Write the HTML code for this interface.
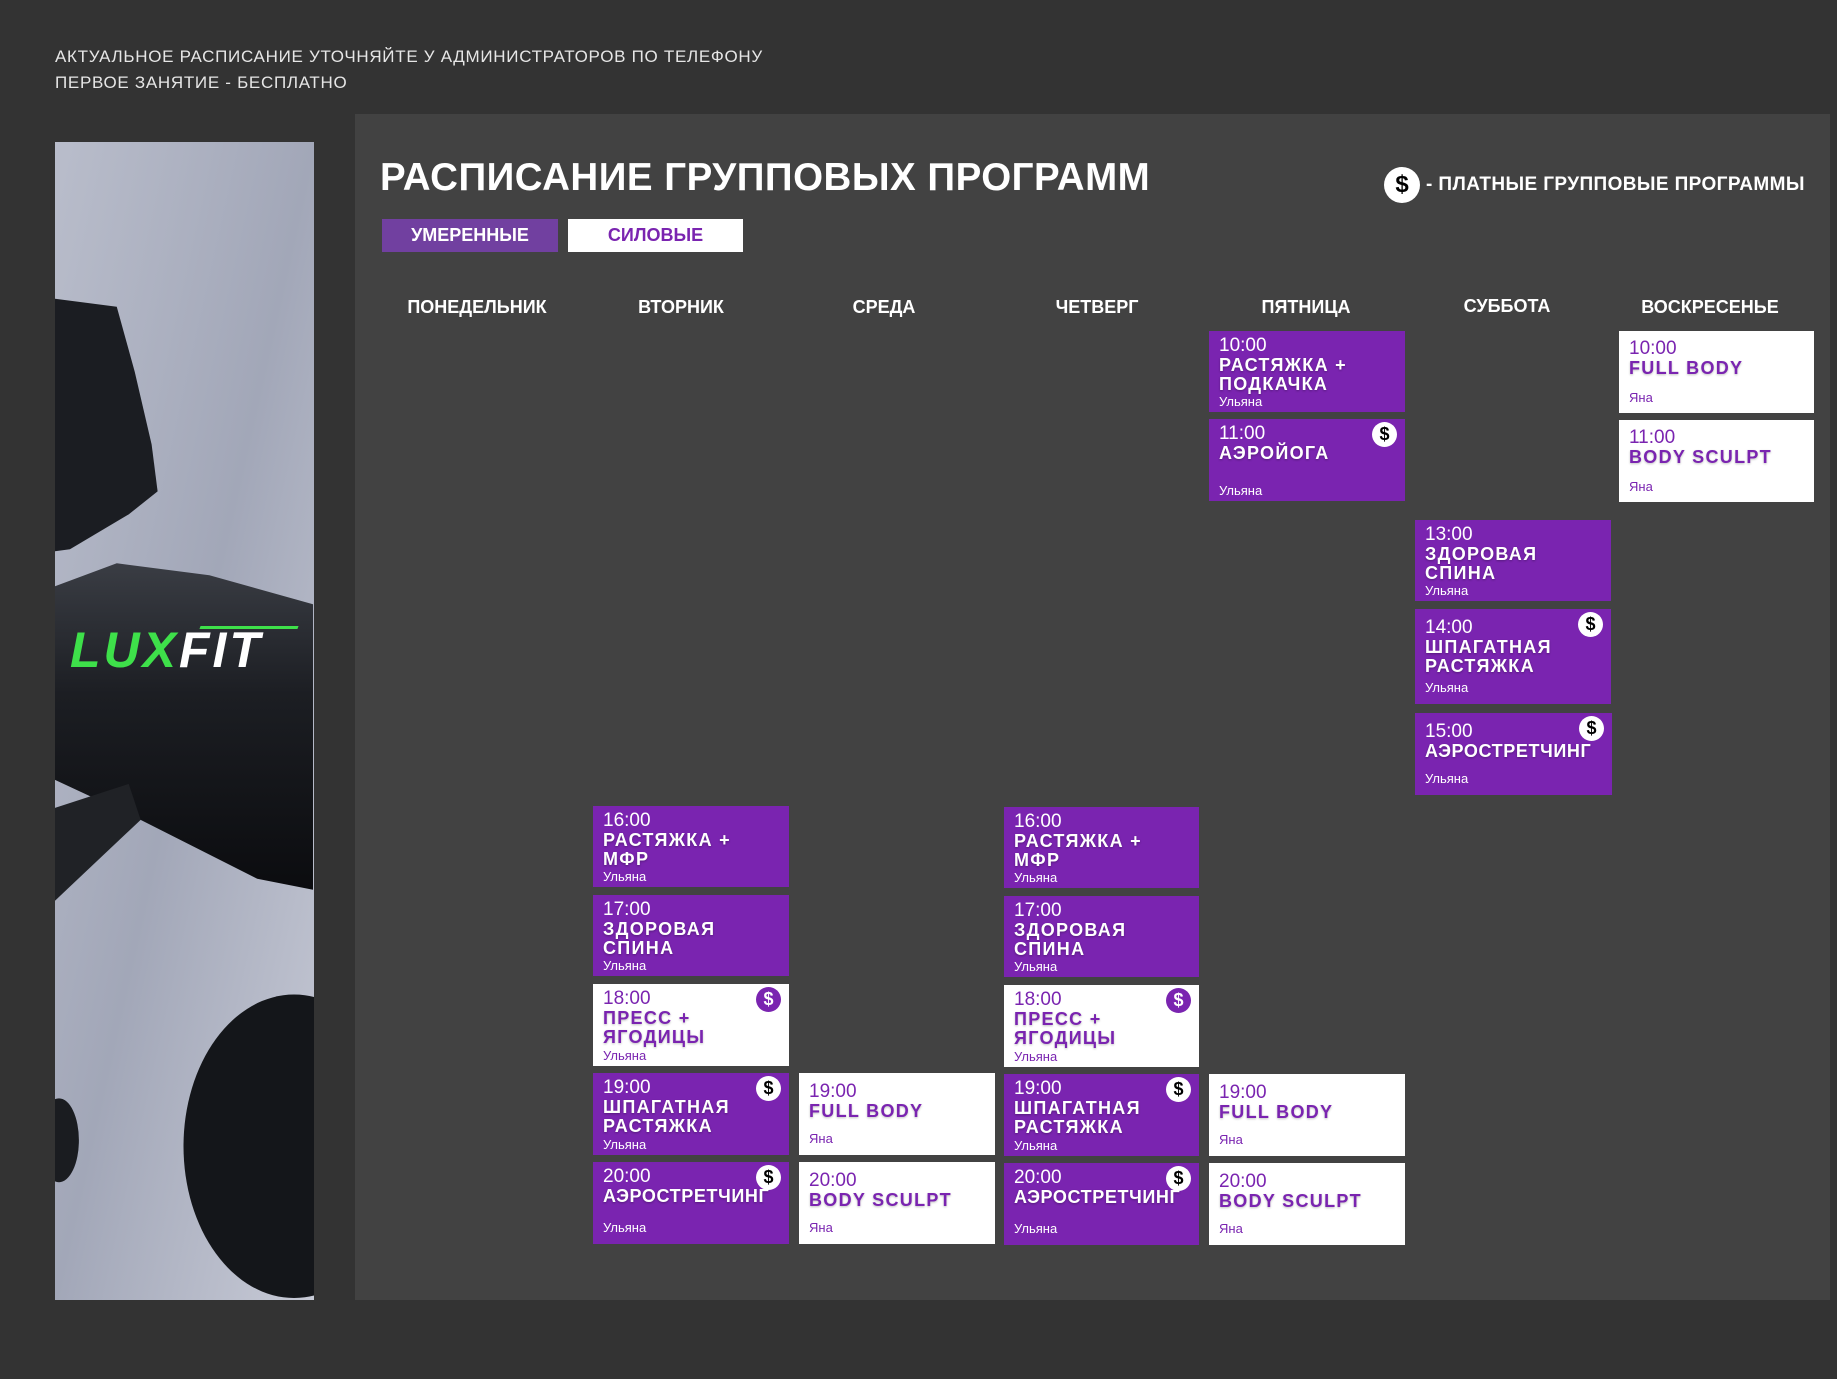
<!DOCTYPE html>
<html><head><meta charset="utf-8"><style>
*{margin:0;padding:0;box-sizing:border-box}
body{width:1837px;height:1379px;background:#333333;position:relative;overflow:hidden;font-family:"Liberation Sans",sans-serif}
.note{position:absolute;left:55px;color:#e6e6e6;font-size:17px;letter-spacing:0.7px;white-space:nowrap}
.panel{position:absolute;left:355px;top:114px;width:1475px;height:1186px;background:#424242}
.title{position:absolute;left:380px;top:156px;color:#fff;font-size:38.5px;font-weight:bold;letter-spacing:0.5px;white-space:nowrap}
.btn{position:absolute;top:219px;height:33px;font-size:18px;font-weight:bold;text-align:center;line-height:33px}
.day{position:absolute;top:297px;width:220px;margin-left:-110px;text-align:center;color:#fff;font-weight:bold;font-size:18px}
.c{position:absolute;background:#7a24b0;color:#fff;padding:5px 10px 0 10px}
.c.w{background:#fff;color:#7a24b0}
.t{font-size:19px;line-height:20px}
.n{font-weight:bold;font-size:18px;letter-spacing:1.3px;line-height:19px;text-shadow:0 1px 2px rgba(0,0,0,.3);white-space:nowrap}
.w .n{text-shadow:0 1px 2px rgba(0,0,0,.25)}
.n.s{letter-spacing:0.6px}
.u{position:absolute;left:10px;bottom:3px;font-size:13px}
.d{position:absolute;right:8px;top:3px;width:25px;height:25px;border-radius:50%;background:#fff;color:#000;font-weight:bold;font-size:18px;text-align:center;line-height:25px}
.w .d{background:#7a24b0;color:#fff}
</style></head><body>
<div class="note" style="top:47px">АКТУАЛЬНОЕ РАСПИСАНИЕ УТОЧНЯЙТЕ У АДМИНИСТРАТОРОВ ПО ТЕЛЕФОНУ</div>
<div class="note" style="top:73px">ПЕРВОЕ ЗАНЯТИЕ - БЕСПЛАТНО</div>
<div class="panel"></div>
<svg style="position:absolute;left:55px;top:142px" width="259" height="1158" viewBox="0 0 260 1160" preserveAspectRatio="none">
<defs><linearGradient id="g" x1="0" y1="0" x2="1" y2="1"><stop offset="0" stop-color="#b9bdcb"/><stop offset="0.5" stop-color="#a2a7b8"/><stop offset="1" stop-color="#c7cad6"/></linearGradient>
<linearGradient id="m" x1="0" y1="0" x2="0" y2="1"><stop offset="0" stop-color="#3a3d44"/><stop offset="0.4" stop-color="#1c1e23"/><stop offset="1" stop-color="#0b0c0f"/></linearGradient></defs>
<rect width="260" height="1160" fill="url(#g)"/>
<path d="M0 157 L62 165 L80 230 L97 303 L103 350 L74 373 L15 408 L0 410Z" fill="#1b1d22"/>
<path d="M0 445 L62 422 L155 434 L259 463 L259 749 L203 738 L86 679 L0 639Z" fill="url(#m)"/>
<path d="M0 667 L74 643 L86 679 L0 760Z" fill="#202226"/>
<ellipse cx="240" cy="1006" rx="111" ry="152" fill="#14161a"/>
<ellipse cx="4" cy="1000" rx="20" ry="42" fill="#1a1c20"/>
</svg>
<div style="position:absolute;left:70px;top:622px;width:230px;height:56px;font-style:italic;font-weight:900;font-size:50px;letter-spacing:3px;line-height:56px;font-family:'Liberation Sans',sans-serif"><span style="color:#3ee04a">LUX</span><span style="color:#fff">FIT</span></div>
<div style="position:absolute;left:200px;top:626px;width:98px;height:3px;background:#3ee04a;transform:skewX(-20deg)"></div>

<div class="title">РАСПИСАНИЕ ГРУППОВЫХ ПРОГРАММ</div>
<div class="btn" style="left:382px;width:176px;background:#7140a0;color:#fff">УМЕРЕННЫЕ</div>
<div class="btn" style="left:568px;width:175px;background:#fff;color:#7a24b0">СИЛОВЫЕ</div>
<div style="position:absolute;left:1384px;top:167px;width:36px;height:36px;border-radius:50%;background:#fff;color:#000;font-weight:bold;font-size:24px;text-align:center;line-height:36px">$</div>
<div style="position:absolute;left:1426px;top:174px;color:#fff;font-weight:bold;font-size:19px;letter-spacing:0.4px;white-space:nowrap">- ПЛАТНЫЕ ГРУППОВЫЕ ПРОГРАММЫ</div>

<div class="day" style="left:477px">ПОНЕДЕЛЬНИК</div>
<div class="day" style="left:681px">ВТОРНИК</div>
<div class="day" style="left:884px">СРЕДА</div>
<div class="day" style="left:1097px">ЧЕТВЕРГ</div>
<div class="day" style="left:1306px">ПЯТНИЦА</div>
<div class="day" style="left:1507px;top:296px">СУББОТА</div>
<div class="day" style="left:1710px">ВОСКРЕСЕНЬЕ</div>

<!-- Friday -->
<div class="c" style="left:1209px;top:331px;width:196px;height:81px"><div class="t">10:00</div><div class="n">РАСТЯЖКА +<br>ПОДКАЧКА</div><div class="u">Ульяна</div></div>
<div class="c" style="left:1209px;top:419px;width:196px;height:82px"><div class="t">11:00</div><div class="n">АЭРОЙОГА</div><div class="u">Ульяна</div><div class="d">$</div></div>
<div class="c w" style="left:1209px;top:1074px;width:196px;height:82px"><div class="t" style="margin-top:4px">19:00</div><div class="n">FULL BODY</div><div class="u" style="bottom:9px">Яна</div></div>
<div class="c w" style="left:1209px;top:1163px;width:196px;height:82px"><div class="t" style="margin-top:4px">20:00</div><div class="n">BODY SCULPT</div><div class="u" style="bottom:9px">Яна</div></div>
<!-- Sunday -->
<div class="c w" style="left:1619px;top:331px;width:195px;height:82px"><div class="t" style="margin-top:3px">10:00</div><div class="n">FULL BODY</div><div class="u" style="bottom:8px">Яна</div></div>
<div class="c w" style="left:1619px;top:420px;width:195px;height:82px"><div class="t" style="margin-top:3px">11:00</div><div class="n">BODY SCULPT</div><div class="u" style="bottom:8px">Яна</div></div>
<!-- Saturday -->
<div class="c" style="left:1415px;top:520px;width:196px;height:81px"><div class="t">13:00</div><div class="n">ЗДОРОВАЯ<br>СПИНА</div><div class="u">Ульяна</div></div>
<div class="c" style="left:1415px;top:609px;width:196px;height:95px"><div class="t" style="margin-top:4px">14:00</div><div class="n">ШПАГАТНАЯ<br>РАСТЯЖКА</div><div class="u" style="bottom:9px">Ульяна</div><div class="d">$</div></div>
<div class="c" style="left:1415px;top:713px;width:197px;height:82px"><div class="t" style="margin-top:4px">15:00</div><div class="n s">АЭРОСТРЕТЧИНГ</div><div class="u" style="bottom:9px">Ульяна</div><div class="d">$</div></div>
<!-- Tuesday -->
<div class="c" style="left:593px;top:806px;width:196px;height:81px"><div class="t">16:00</div><div class="n">РАСТЯЖКА +<br>МФР</div><div class="u">Ульяна</div></div>
<div class="c" style="left:593px;top:895px;width:196px;height:81px"><div class="t">17:00</div><div class="n">ЗДОРОВАЯ<br>СПИНА</div><div class="u">Ульяна</div></div>
<div class="c w" style="left:593px;top:984px;width:196px;height:82px"><div class="t">18:00</div><div class="n">ПРЕСС +<br>ЯГОДИЦЫ</div><div class="u">Ульяна</div><div class="d">$</div></div>
<div class="c" style="left:593px;top:1073px;width:196px;height:82px"><div class="t">19:00</div><div class="n">ШПАГАТНАЯ<br>РАСТЯЖКА</div><div class="u">Ульяна</div><div class="d">$</div></div>
<div class="c" style="left:593px;top:1162px;width:196px;height:82px"><div class="t">20:00</div><div class="n s">АЭРОСТРЕТЧИНГ</div><div class="u" style="bottom:9px">Ульяна</div><div class="d">$</div></div>
<!-- Wednesday -->
<div class="c w" style="left:799px;top:1073px;width:196px;height:82px"><div class="t" style="margin-top:4px">19:00</div><div class="n">FULL BODY</div><div class="u" style="bottom:9px">Яна</div></div>
<div class="c w" style="left:799px;top:1162px;width:196px;height:82px"><div class="t" style="margin-top:4px">20:00</div><div class="n">BODY SCULPT</div><div class="u" style="bottom:9px">Яна</div></div>
<!-- Thursday -->
<div class="c" style="left:1004px;top:807px;width:195px;height:81px"><div class="t">16:00</div><div class="n">РАСТЯЖКА +<br>МФР</div><div class="u">Ульяна</div></div>
<div class="c" style="left:1004px;top:896px;width:195px;height:81px"><div class="t">17:00</div><div class="n">ЗДОРОВАЯ<br>СПИНА</div><div class="u">Ульяна</div></div>
<div class="c w" style="left:1004px;top:985px;width:195px;height:82px"><div class="t">18:00</div><div class="n">ПРЕСС +<br>ЯГОДИЦЫ</div><div class="u">Ульяна</div><div class="d">$</div></div>
<div class="c" style="left:1004px;top:1074px;width:195px;height:82px"><div class="t">19:00</div><div class="n">ШПАГАТНАЯ<br>РАСТЯЖКА</div><div class="u">Ульяна</div><div class="d">$</div></div>
<div class="c" style="left:1004px;top:1163px;width:195px;height:82px"><div class="t">20:00</div><div class="n s">АЭРОСТРЕТЧИНГ</div><div class="u" style="bottom:9px">Ульяна</div><div class="d">$</div></div>
</body></html>
